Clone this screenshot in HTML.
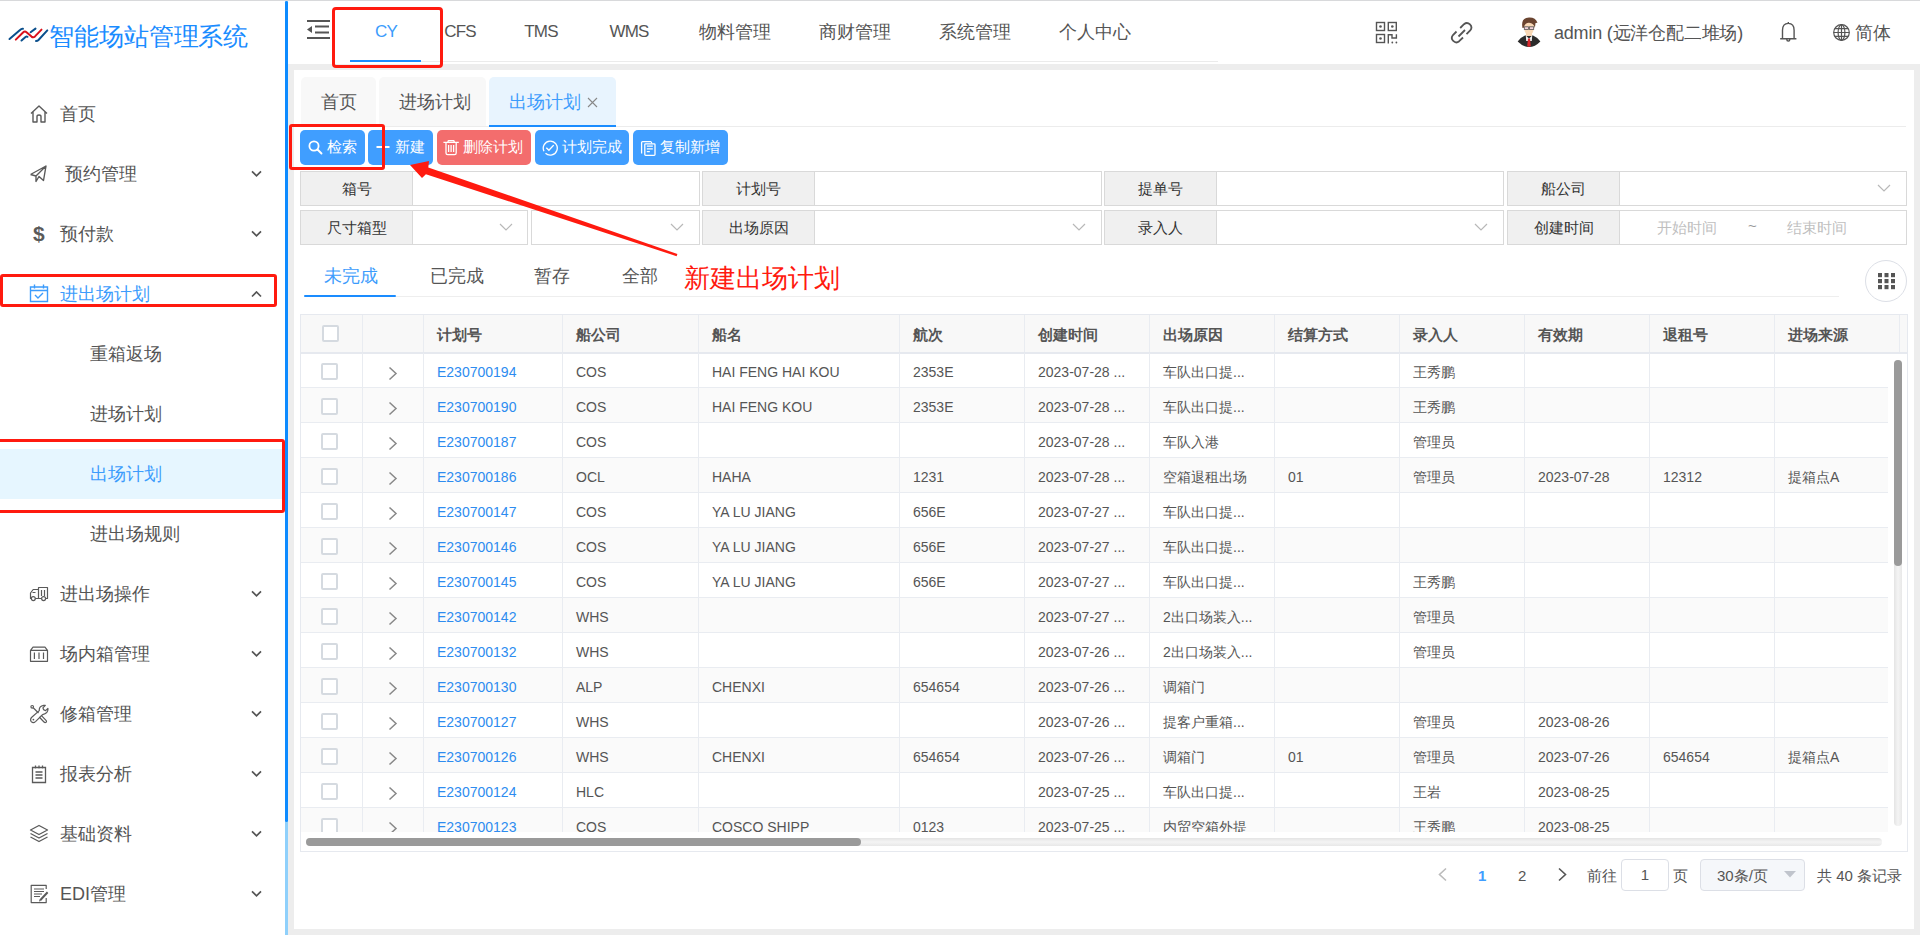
<!DOCTYPE html><html><head><meta charset="utf-8"><title>出场计划</title><style>
*{box-sizing:border-box;margin:0;padding:0}
html,body{width:1920px;height:935px;overflow:hidden}
body{position:relative;font-family:"Liberation Sans",sans-serif;background:#fff;color:#606266}
.a{position:absolute}
.nw{white-space:nowrap}
svg{display:block}
</style></head><body><div class="a" style="left:0;top:0;width:1920px;height:1px;background:#d8d9db"></div>
<div class="a" style="left:285px;top:1px;width:3px;height:934px;background:#8fd0fb"></div>
<div class="a" style="left:285px;top:1px;width:3px;height:821px;background:#0d8bff;border-radius:2px"></div>
<svg class="a" style="left:8px;top:26px" width="42" height="17" viewBox="8 26 42 17">
<g fill="none" stroke-linecap="round" stroke-width="2">
<path d="M9.5 39 L20 30 Q21.5 28.5 23 28.8" stroke="#0b4f8c"/>
<path d="M15.8 39.6 L23 32.5 Q24.8 30.8 26.5 32.2 L31.5 36.6 Q33.3 38 35 36.4 L41.5 29.6" stroke="#d9101b"/>
<path d="M21.5 40.5 L25.5 37 Q26.5 36.3 27.5 36.8" stroke="#0b4f8c"/>
<path d="M30.6 32.2 L35.5 28.6" stroke="#0b4f8c"/>
<path d="M36 41 Q37.5 41 38.5 40 L47.3 30.4" stroke="#0b4f8c"/>
</g></svg>
<div class="a nw" style="left:49px;top:19px;font-size:25px;line-height:34px;color:#1a8cff;letter-spacing:-0.1px">智能场站管理系统</div>
<div class="a" style="left:29px;top:104px"><svg width="20" height="20" viewBox="0 0 20 20"><path d="M2 9.5 L10 2 L18 9.5 M4 8 V18 H8 V12.5 Q8 11 10 11 Q12 11 12 12.5 V18 H16 V8" fill="none" stroke="#5a5a5a" stroke-width="1.4" stroke-linejoin="round"/></svg></div>
<div class="a nw" style="left:60px;top:102px;font-size:18px;line-height:24px;color:#555">首页</div>
<div class="a" style="left:29px;top:164px"><svg width="20" height="20" viewBox="0 0 20 20"><path d="M1.5 10.5 L17 2 L14.5 16.5 L10 12.5 L7 17.5 V12 L17 2 M1.5 10.5 L7 12" fill="none" stroke="#5a5a5a" stroke-width="1.4" stroke-linejoin="round"/></svg></div>
<div class="a nw" style="left:65px;top:162px;font-size:18px;line-height:24px;color:#555">预约管理</div>
<svg class="a" style="left:251px;top:170px" width="11" height="7" viewBox="0 0 11 7"><path d="M1 1.3 L5.5 5.8 L10 1.3" fill="none" stroke="#555" stroke-width="1.7"/></svg>
<div class="a nw" style="left:33px;top:220px;font-size:21px;line-height:28px;font-weight:bold;color:#5a5a5a">$</div>
<div class="a nw" style="left:60px;top:222px;font-size:18px;line-height:24px;color:#555">预付款</div>
<svg class="a" style="left:251px;top:230px" width="11" height="7" viewBox="0 0 11 7"><path d="M1 1.3 L5.5 5.8 L10 1.3" fill="none" stroke="#555" stroke-width="1.7"/></svg>
<div class="a" style="left:29px;top:584px"><svg width="20" height="20" viewBox="0 0 20 20"><path d="M9.5 3.5 H18.5 V14.5 H1.5 V9 L4.2 5.5 H9.5 Z M9.5 5.5 V14.5 M12.5 6 V12 M15.5 6 V12 M3.5 8.5 H6.5" fill="none" stroke="#5a5a5a" stroke-width="1.2" stroke-linejoin="round"/><circle cx="4.3" cy="14.6" r="2" fill="#fff" stroke="#5a5a5a" stroke-width="1.2"/><circle cx="14.6" cy="14.6" r="2" fill="#fff" stroke="#5a5a5a" stroke-width="1.2"/></svg></div>
<div class="a nw" style="left:60px;top:582px;font-size:18px;line-height:24px;color:#555">进出场操作</div>
<svg class="a" style="left:251px;top:590px" width="11" height="7" viewBox="0 0 11 7"><path d="M1 1.3 L5.5 5.8 L10 1.3" fill="none" stroke="#555" stroke-width="1.7"/></svg>
<div class="a" style="left:29px;top:644px"><svg width="20" height="20" viewBox="0 0 20 20"><path d="M1.5 6.3 L4 3.2 H16 L18.5 6.3 V17.3 H1.5 Z M1.5 6.3 H18.5 M5.4 8.5 V15 M10 8.5 V15 M14.5 8.5 V15" fill="none" stroke="#5a5a5a" stroke-width="1.2" stroke-linejoin="round"/></svg></div>
<div class="a nw" style="left:60px;top:642px;font-size:18px;line-height:24px;color:#555">场内箱管理</div>
<svg class="a" style="left:251px;top:650px" width="11" height="7" viewBox="0 0 11 7"><path d="M1 1.3 L5.5 5.8 L10 1.3" fill="none" stroke="#555" stroke-width="1.7"/></svg>
<div class="a" style="left:29px;top:704px"><svg width="20" height="20" viewBox="0 0 20 20"><g fill="none" stroke="#5a5a5a" stroke-width="1.2" stroke-linejoin="round"><circle cx="3.2" cy="2.8" r="1.3"/><path d="M4.2 3.8 L9.5 9"/><path d="M12 11.2 L17 16.3 Q18 17.5 17 18.3 Q16 19 15 18 L10.2 13"/><path d="M2.5 13.5 L10.3 6.6 Q9.8 2.2 14.6 1.3 L16.3 1.4 L13.9 3.8 Q14.2 6.4 16.6 6.6 L18.9 4.3 Q19.6 9.2 13.6 10.6 L6.5 17.6 Q4.2 19.6 2.3 17.6 Q0.8 15.6 2.5 13.5 Z"/></g><circle cx="4.4" cy="15.6" r="0.9" fill="#5a5a5a"/></svg></div>
<div class="a nw" style="left:60px;top:702px;font-size:18px;line-height:24px;color:#555">修箱管理</div>
<svg class="a" style="left:251px;top:710px" width="11" height="7" viewBox="0 0 11 7"><path d="M1 1.3 L5.5 5.8 L10 1.3" fill="none" stroke="#555" stroke-width="1.7"/></svg>
<div class="a" style="left:30px;top:764px"><svg width="18" height="20" viewBox="0 0 18 20"><path d="M2.5 3.5 H15.5 V18.5 H2.5 Z M5.5 1.5 V4.5 M9 1.5 V4.5 M12.5 1.5 V4.5 M5.5 8 H12.5 M5.5 11 H12.5 M5.5 14 H12.5" fill="none" stroke="#5a5a5a" stroke-width="1.3"/></svg></div>
<div class="a nw" style="left:60px;top:762px;font-size:18px;line-height:24px;color:#555">报表分析</div>
<svg class="a" style="left:251px;top:770px" width="11" height="7" viewBox="0 0 11 7"><path d="M1 1.3 L5.5 5.8 L10 1.3" fill="none" stroke="#555" stroke-width="1.7"/></svg>
<div class="a" style="left:29px;top:824px"><svg width="20" height="20" viewBox="0 0 20 20"><path d="M10 1.5 L18.5 6 L10 10.5 L1.5 6 Z M1.5 9.5 L10 14 L18.5 9.5 M1.5 13 L10 17.5 L18.5 13" fill="none" stroke="#5a5a5a" stroke-width="1.3" stroke-linejoin="round"/></svg></div>
<div class="a nw" style="left:60px;top:822px;font-size:18px;line-height:24px;color:#555">基础资料</div>
<svg class="a" style="left:251px;top:830px" width="11" height="7" viewBox="0 0 11 7"><path d="M1 1.3 L5.5 5.8 L10 1.3" fill="none" stroke="#555" stroke-width="1.7"/></svg>
<div class="a" style="left:29px;top:884px"><svg width="20" height="20" viewBox="0 0 20 20"><path d="M17.2 5 V1.3 H2.2 V18.6 H17.2 V14 M5 5 H15 M5 7.5 H15 M5 10 H13 M5 12.5 H11" fill="none" stroke="#5a5a5a" stroke-width="1.2" stroke-linejoin="round"/><path d="M18.6 8.3 L11.2 16.3" stroke="#5a5a5a" stroke-width="2"/><path d="M10.6 15.6 L10 17.5 L11.9 16.9 Z" fill="#5a5a5a"/></svg></div>
<div class="a nw" style="left:60px;top:882px;font-size:18px;line-height:24px;color:#555">EDI管理</div>
<svg class="a" style="left:251px;top:890px" width="11" height="7" viewBox="0 0 11 7"><path d="M1 1.3 L5.5 5.8 L10 1.3" fill="none" stroke="#555" stroke-width="1.7"/></svg>
<svg class="a" style="left:29px;top:284px" width="20" height="19" viewBox="0 0 20 19"><path d="M1.5 3 H18.5 V17.5 H1.5 Z M1.5 6.5 H18.5 M5.5 0.5 V4.5 M14.5 0.5 V4.5 M6 11 L9 14 L14 9" fill="none" stroke="#3c9cfc" stroke-width="1.4"/></svg>
<div class="a nw" style="left:60px;top:282px;font-size:18px;line-height:24px;color:#3c9cfc">进出场计划</div>
<svg class="a" style="left:251px;top:291px" width="11" height="7" viewBox="0 0 11 7"><path d="M1 5.5 L5.5 1 L10 5.5" fill="none" stroke="#555" stroke-width="1.7"/></svg>
<div class="a" style="left:0;top:449px;width:285px;height:50px;background:#e6f6ff"></div>
<div class="a nw" style="left:90px;top:342px;font-size:18px;line-height:24px;color:#555">重箱返场</div>
<div class="a nw" style="left:90px;top:402px;font-size:18px;line-height:24px;color:#555">进场计划</div>
<div class="a nw" style="left:90px;top:462px;font-size:18px;line-height:24px;color:#3c9cfc">出场计划</div>
<div class="a nw" style="left:90px;top:522px;font-size:18px;line-height:24px;color:#555">进出场规则</div>
<div class="a" style="left:350px;top:61px;width:868px;height:1px;background:#ebebeb"></div>
<div class="a" style="left:288px;top:64px;width:1632px;height:6px;background:#ededed"></div>
<div class="a" style="left:288px;top:64px;width:6px;height:871px;background:#ededed"></div>
<div class="a" style="left:1914px;top:64px;width:6px;height:871px;background:#ededed"></div>
<div class="a" style="left:288px;top:929px;width:1632px;height:6px;background:#ededed"></div>
<svg class="a" style="left:305px;top:18px" width="26" height="23" viewBox="305 18 26 23"><g fill="#555">
<rect x="307" y="20" width="23" height="2"/><rect x="315" y="25.5" width="14" height="2"/><rect x="315" y="31.5" width="14" height="2"/><rect x="307" y="37" width="23" height="2"/>
<path d="M307 29.5 L312 26 V33 Z"/></g></svg>
<div class="a nw" style="left:326px;width:120px;text-align:center;top:20px;line-height:24px;color:#3c9cfc;letter-spacing:-0.8px;font-size:17px;">CY</div>
<div class="a nw" style="left:400px;width:120px;text-align:center;top:20px;line-height:24px;color:#555;letter-spacing:-0.8px;font-size:17px;">CFS</div>
<div class="a nw" style="left:481px;width:120px;text-align:center;top:20px;line-height:24px;color:#555;letter-spacing:-0.8px;font-size:17px;">TMS</div>
<div class="a nw" style="left:569px;width:120px;text-align:center;top:20px;line-height:24px;color:#555;letter-spacing:-0.8px;font-size:17px;">WMS</div>
<div class="a nw" style="left:675px;width:120px;text-align:center;top:20px;line-height:24px;color:#555;font-size:18px;">物料管理</div>
<div class="a nw" style="left:795px;width:120px;text-align:center;top:20px;line-height:24px;color:#555;font-size:18px;">商财管理</div>
<div class="a nw" style="left:915px;width:120px;text-align:center;top:20px;line-height:24px;color:#555;font-size:18px;">系统管理</div>
<div class="a nw" style="left:1035px;width:120px;text-align:center;top:20px;line-height:24px;color:#555;font-size:18px;">个人中心</div>
<div class="a" style="left:350px;top:60px;width:71px;height:2px;background:#1a8cff"></div>
<svg class="a" style="left:1375px;top:21px" width="23" height="23" viewBox="0 0 23 23"><g fill="none" stroke="#555" stroke-width="1.4">
<rect x="1.5" y="1.5" width="8" height="8"/><rect x="13.3" y="1.5" width="8" height="8"/><rect x="1.5" y="13.5" width="8" height="8"/>
<path d="M13.3 22.5 V13.8 H17 V17 H21.4 V13.3"/></g>
<g fill="#555"><circle cx="5.5" cy="5.5" r="1.3"/><circle cx="17.3" cy="5.5" r="1.3"/><circle cx="5.5" cy="17.5" r="1.3"/><circle cx="17.3" cy="21.5" r="0.9"/><circle cx="21.4" cy="21.5" r="0.9"/></g></svg>
<svg class="a" style="left:1450px;top:20.5px" width="24" height="24" viewBox="0 0 24 24"><g fill="none" stroke="#555" stroke-width="1.8" stroke-linecap="butt">
<path d="M10.2 7 L14 3.2 A4.4 4.4 0 0 1 20.2 9.4 L16.5 13.2"/><path d="M6.5 10.5 L3 14 A4.4 4.4 0 0 0 9.2 20.2 L13 16.5"/><path d="M8.5 15.5 L15 9"/></g></svg>
<svg class="a" style="left:1515px;top:16px" width="28" height="33" viewBox="0 0 28 33">
<path d="M2.7 25.5 Q6 21 10 19.5 L18 19.5 Q22 21 25.4 25.5 Q20 31 14 31 Q8 31 2.7 25.5 Z" fill="#2b2b2b"/>
<path d="M11 17 H17 V20 H11 Z" fill="#f6d5b3"/>
<path d="M10.8 19.5 L14 22.5 L17.2 19.5 L16.8 25 L11.2 25 Z" fill="#eef0f0"/>
<path d="M13 22.5 H15 L15.8 30 L14 31 L12.2 30 Z" fill="#d8282c"/>
<path d="M8.5 6.5 Q8.5 18.5 14 19.3 Q19.5 18.5 19.5 6.5 Z" fill="#f8d8b6"/>
<path d="M7.5 12 Q5.5 1.8 14 1.5 Q20.5 1.2 22.5 6.8 L20.5 7 Q20.3 9.5 19.8 12 Q19 7.2 14 6.8 Q9.5 7 8.6 12 Z" fill="#6a4430"/>
<rect x="9.3" y="10.8" width="4.2" height="2.6" fill="#f0d0d8" stroke="#555" stroke-width="0.8"/><rect x="14.5" y="10.8" width="4.2" height="2.6" fill="#f0d0d8" stroke="#555" stroke-width="0.8"/>
</svg>
<div class="a nw" style="left:1554px;top:21px;font-size:18px;line-height:24px;color:#555;letter-spacing:-0.2px">admin (远洋仓配二堆场)</div>
<svg class="a" style="left:1779px;top:21px" width="18" height="22" viewBox="0 0 18 22"><path d="M3.5 17.8 V9.2 Q3.5 2.4 9.3 2.4 Q15.1 2.4 15.1 9.2 V17.8 M1.2 17.8 H17.4 M7.8 18.6 A1.5 1.5 0 0 0 10.8 18.6 M9.3 1 V2.4" fill="none" stroke="#555" stroke-width="1.4" stroke-linejoin="round"/></svg>
<svg class="a" style="left:1833px;top:24px" width="18" height="18" viewBox="0 0 18 18"><g fill="none" stroke="#555" stroke-width="1.2"><circle cx="8.5" cy="8.5" r="7.8"/><ellipse cx="8.5" cy="8.5" rx="3.4" ry="7.8"/><path d="M0.7 8.5 H16.3 M1.8 4.6 H15.2 M1.8 12.4 H15.2 M8.5 0.7 V16.3"/></g></svg>
<div class="a nw" style="left:1855px;top:21px;font-size:18px;line-height:24px;color:#555">简体</div>
<div class="a" style="left:294px;top:70px;width:1620px;height:859px;background:#fff"></div>
<div class="a" style="left:301px;top:126px;width:1605px;height:1px;background:#ececec"></div>
<div class="a" style="left:301px;top:77px;width:75px;height:49px;background:#f8f8f8;border-radius:5px 5px 0 0"></div>
<div class="a nw" style="left:321px;top:90px;font-size:18px;line-height:24px;color:#555">首页</div>
<div class="a" style="left:379px;top:77px;width:107px;height:49px;background:#f8f8f8;border-radius:5px 5px 0 0"></div>
<div class="a nw" style="left:399px;top:90px;font-size:18px;line-height:24px;color:#555">进场计划</div>
<div class="a" style="left:489px;top:77px;width:127px;height:49px;background:#e8f4fe;border-radius:5px 5px 0 0"></div>
<div class="a nw" style="left:509px;top:90px;font-size:18px;line-height:24px;color:#3c9cfc">出场计划</div>
<div class="a" style="left:489px;top:125px;width:127px;height:2px;background:#1a8cff"></div>
<svg class="a" style="left:587px;top:97px" width="11" height="11" viewBox="0 0 11 11"><path d="M1 1 L10 10 M10 1 L1 10" stroke="#888" stroke-width="1.1"/></svg>
<div class="a" style="left:300px;top:130px;width:65px;height:35px;background:#409eff;border-radius:5px"></div>
<div class="a" style="left:308px;top:140px"><svg width="15" height="15" viewBox="0 0 15 15"><circle cx="6" cy="6" r="4.6" fill="none" stroke="#fff" stroke-width="1.8"/><path d="M9.5 9.5 L13.5 13.5" stroke="#fff" stroke-width="1.9" stroke-linecap="round"/></svg></div>
<div class="a nw" style="left:327px;top:137px;font-size:15px;line-height:20px;color:#fff;font-weight:500">检索</div>
<div class="a" style="left:368px;top:130px;width:65px;height:35px;background:#409eff;border-radius:5px"></div>
<div class="a" style="left:376px;top:140px"><svg width="14" height="14" viewBox="0 0 14 14"><path d="M0.5 7 H13.5 M7 0.5 V13.5" stroke="#fff" stroke-width="1.9"/></svg></div>
<div class="a nw" style="left:395px;top:137px;font-size:15px;line-height:20px;color:#fff;font-weight:500">新建</div>
<div class="a" style="left:437px;top:130px;width:94px;height:35px;background:#f36d6d;border-radius:5px"></div>
<div class="a" style="left:443px;top:140px"><svg width="17" height="16" viewBox="0 0 17 16"><path d="M0.4 2.4 H15.8 M5 2.4 V1.6 Q5 0.6 6 0.6 H10.2 Q11.2 0.6 11.2 1.6 V2.4 M3 2.4 V12.9 Q3 14.6 4.7 14.6 H11.5 Q13.2 14.6 13.2 12.9 V2.4 M5.6 5 V12 M8.1 5 V12 M10.6 5 V12" fill="none" stroke="#fff" stroke-width="1.3" stroke-linejoin="round"/></svg></div>
<div class="a nw" style="left:463px;top:137px;font-size:15px;line-height:20px;color:#fff;font-weight:500">删除计划</div>
<div class="a" style="left:535px;top:130px;width:94px;height:35px;background:#409eff;border-radius:5px"></div>
<div class="a" style="left:542px;top:140px"><svg width="16" height="16" viewBox="0 0 16 16"><path d="M3.5 13.2 A7 7 0 1 0 2 11.2" fill="none" stroke="#fff" stroke-width="1.3"/><path d="M4.3 7.8 L6.9 10.3 L11.7 5.1" fill="none" stroke="#fff" stroke-width="1.4"/></svg></div>
<div class="a nw" style="left:562px;top:137px;font-size:15px;line-height:20px;color:#fff;font-weight:500">计划完成</div>
<div class="a" style="left:633px;top:130px;width:95px;height:35px;background:#409eff;border-radius:5px"></div>
<div class="a" style="left:640px;top:140px"><svg width="16" height="17" viewBox="0 0 16 17"><path d="M1.6 13.6 V2.6 Q1.6 1.6 2.6 1.6 H10.6 Q11.6 1.6 11.8 3.6" fill="none" stroke="#fff" stroke-width="1.3"/><rect x="4.8" y="3.8" width="10.2" height="11.6" rx="0.8" fill="#409eff" stroke="#fff" stroke-width="1.3"/><path d="M6.8 6.1 H12.8 M6.8 8.9 H12.8 M6.8 11.6 H9.8" fill="none" stroke="#fff" stroke-width="1.3"/></svg></div>
<div class="a nw" style="left:660px;top:137px;font-size:15px;line-height:20px;color:#fff;font-weight:500">复制新增</div>
<div class="a nw" style="left:300px;top:171px;width:113px;height:35px;background:#f0f0f0;border:1px solid #d9d9d9;text-align:center;font-size:15px;line-height:33px;color:#333">箱号</div>
<div class="a" style="left:412px;top:171px;width:288px;height:35px;background:#fff;border:1px solid #d9d9d9"></div>
<div class="a nw" style="left:702px;top:171px;width:113px;height:35px;background:#f0f0f0;border:1px solid #d9d9d9;text-align:center;font-size:15px;line-height:33px;color:#333">计划号</div>
<div class="a" style="left:814px;top:171px;width:288px;height:35px;background:#fff;border:1px solid #d9d9d9"></div>
<div class="a nw" style="left:1104px;top:171px;width:113px;height:35px;background:#f0f0f0;border:1px solid #d9d9d9;text-align:center;font-size:15px;line-height:33px;color:#333">提单号</div>
<div class="a" style="left:1216px;top:171px;width:288px;height:35px;background:#fff;border:1px solid #d9d9d9"></div>
<div class="a nw" style="left:1507px;top:171px;width:113px;height:35px;background:#f0f0f0;border:1px solid #d9d9d9;text-align:center;font-size:15px;line-height:33px;color:#333">船公司</div>
<div class="a" style="left:1619px;top:171px;width:288px;height:35px;background:#fff;border:1px solid #d9d9d9"></div>
<svg class="a" style="left:1877px;top:184px" width="14" height="8" viewBox="0 0 14 8"><path d="M1 1 L7 7 L13 1" fill="none" stroke="#b8b8b8" stroke-width="1.2"/></svg>
<div class="a nw" style="left:300px;top:210px;width:113px;height:35px;background:#f0f0f0;border:1px solid #d9d9d9;text-align:center;font-size:15px;line-height:33px;color:#333">尺寸箱型</div>
<div class="a" style="left:412px;top:210px;width:116px;height:35px;background:#fff;border:1px solid #d9d9d9"></div>
<svg class="a" style="left:499px;top:223px" width="14" height="8" viewBox="0 0 14 8"><path d="M1 1 L7 7 L13 1" fill="none" stroke="#b8b8b8" stroke-width="1.2"/></svg>
<div class="a" style="left:531px;top:210px;width:169px;height:35px;background:#fff;border:1px solid #d9d9d9"></div>
<svg class="a" style="left:670px;top:223px" width="14" height="8" viewBox="0 0 14 8"><path d="M1 1 L7 7 L13 1" fill="none" stroke="#b8b8b8" stroke-width="1.2"/></svg>
<div class="a nw" style="left:702px;top:210px;width:113px;height:35px;background:#f0f0f0;border:1px solid #d9d9d9;text-align:center;font-size:15px;line-height:33px;color:#333">出场原因</div>
<div class="a" style="left:814px;top:210px;width:288px;height:35px;background:#fff;border:1px solid #d9d9d9"></div>
<svg class="a" style="left:1072px;top:223px" width="14" height="8" viewBox="0 0 14 8"><path d="M1 1 L7 7 L13 1" fill="none" stroke="#b8b8b8" stroke-width="1.2"/></svg>
<div class="a nw" style="left:1104px;top:210px;width:113px;height:35px;background:#f0f0f0;border:1px solid #d9d9d9;text-align:center;font-size:15px;line-height:33px;color:#333">录入人</div>
<div class="a" style="left:1216px;top:210px;width:288px;height:35px;background:#fff;border:1px solid #d9d9d9"></div>
<svg class="a" style="left:1474px;top:223px" width="14" height="8" viewBox="0 0 14 8"><path d="M1 1 L7 7 L13 1" fill="none" stroke="#b8b8b8" stroke-width="1.2"/></svg>
<div class="a nw" style="left:1507px;top:210px;width:113px;height:35px;background:#f0f0f0;border:1px solid #d9d9d9;text-align:center;font-size:15px;line-height:33px;color:#333">创建时间</div>
<div class="a" style="left:1619px;top:210px;width:288px;height:35px;background:#fff;border:1px solid #d9d9d9"></div>
<div class="a nw" style="left:1657px;top:218px;font-size:15px;line-height:20px;color:#bfbfbf">开始时间</div>
<div class="a nw" style="left:1748px;top:216px;font-size:15px;line-height:20px;color:#999">~</div>
<div class="a nw" style="left:1787px;top:218px;font-size:15px;line-height:20px;color:#bfbfbf">结束时间</div>
<div class="a" style="left:304px;top:296px;width:1535px;height:1px;background:#eeeeee"></div>
<div class="a nw" style="left:324px;top:264px;font-size:18px;line-height:24px;color:#3c9cfc">未完成</div>
<div class="a nw" style="left:430px;top:264px;font-size:18px;line-height:24px;color:#555">已完成</div>
<div class="a nw" style="left:534px;top:264px;font-size:18px;line-height:24px;color:#555">暂存</div>
<div class="a nw" style="left:622px;top:264px;font-size:18px;line-height:24px;color:#555">全部</div>
<div class="a" style="left:304px;top:295px;width:92px;height:2px;border-radius:1px;background:#1a8cff"></div>
<div class="a" style="left:1865px;top:260px;width:42px;height:42px;border:1px solid #dcdfe6;border-radius:50%;background:#fff"></div>
<svg class="a" style="left:1877.5px;top:272.5px" width="17.5" height="17" viewBox="0 0 17.5 17"><g fill="#555"><rect x="0.0" y="0" width="4" height="4.2"/><rect x="6.5" y="0" width="4" height="4.2"/><rect x="13.0" y="0" width="4" height="4.2"/><rect x="0.0" y="6" width="4" height="4.2"/><rect x="6.5" y="6" width="4" height="4.2"/><rect x="13.0" y="6" width="4" height="4.2"/><rect x="0.0" y="12" width="4" height="4.2"/><rect x="6.5" y="12" width="4" height="4.2"/><rect x="13.0" y="12" width="4" height="4.2"/></g></svg>
<div class="a" style="left:300px;top:314px;width:1608px;height:538px;border:1px solid #e6e9ef;background:#fff"></div>
<div class="a" style="left:301px;top:315px;width:1606px;height:37px;background:#f8f8f8"></div>
<div class="a" style="left:301px;top:352px;width:1606px;height:2px;background:#e6e9ef"></div>
<div class="a" style="left:362px;top:315px;width:1px;height:37px;background:#e9ecf1"></div>
<div class="a" style="left:423px;top:315px;width:1px;height:37px;background:#e9ecf1"></div>
<div class="a" style="left:562px;top:315px;width:1px;height:37px;background:#e9ecf1"></div>
<div class="a" style="left:698px;top:315px;width:1px;height:37px;background:#e9ecf1"></div>
<div class="a" style="left:899px;top:315px;width:1px;height:37px;background:#e9ecf1"></div>
<div class="a" style="left:1024px;top:315px;width:1px;height:37px;background:#e9ecf1"></div>
<div class="a" style="left:1149px;top:315px;width:1px;height:37px;background:#e9ecf1"></div>
<div class="a" style="left:1274px;top:315px;width:1px;height:37px;background:#e9ecf1"></div>
<div class="a" style="left:1399px;top:315px;width:1px;height:37px;background:#e9ecf1"></div>
<div class="a" style="left:1524px;top:315px;width:1px;height:37px;background:#e9ecf1"></div>
<div class="a" style="left:1649px;top:315px;width:1px;height:37px;background:#e9ecf1"></div>
<div class="a" style="left:1774px;top:315px;width:1px;height:37px;background:#e9ecf1"></div>
<div class="a" style="left:1899px;top:315px;width:1px;height:37px;background:#e9ecf1"></div>
<div class="a nw" style="left:437px;top:325px;font-size:15px;line-height:20px;color:#555;font-weight:bold">计划号</div>
<div class="a nw" style="left:576px;top:325px;font-size:15px;line-height:20px;color:#555;font-weight:bold">船公司</div>
<div class="a nw" style="left:712px;top:325px;font-size:15px;line-height:20px;color:#555;font-weight:bold">船名</div>
<div class="a nw" style="left:913px;top:325px;font-size:15px;line-height:20px;color:#555;font-weight:bold">航次</div>
<div class="a nw" style="left:1038px;top:325px;font-size:15px;line-height:20px;color:#555;font-weight:bold">创建时间</div>
<div class="a nw" style="left:1163px;top:325px;font-size:15px;line-height:20px;color:#555;font-weight:bold">出场原因</div>
<div class="a nw" style="left:1288px;top:325px;font-size:15px;line-height:20px;color:#555;font-weight:bold">结算方式</div>
<div class="a nw" style="left:1413px;top:325px;font-size:15px;line-height:20px;color:#555;font-weight:bold">录入人</div>
<div class="a nw" style="left:1538px;top:325px;font-size:15px;line-height:20px;color:#555;font-weight:bold">有效期</div>
<div class="a nw" style="left:1663px;top:325px;font-size:15px;line-height:20px;color:#555;font-weight:bold">退租号</div>
<div class="a nw" style="left:1788px;top:325px;font-size:15px;line-height:20px;color:#555;font-weight:bold">进场来源</div>
<div class="a" style="left:322px;top:325px;width:17px;height:17px;border:2px solid #d5dae0;border-radius:2px;background:#fff"></div>
<div class="a" style="left:300px;top:353px;width:1607px;height:479px;overflow:hidden"><div class="a" style="left:1px;top:34px;width:1587px;height:1px;background:#e9ecf1"></div><div class="a" style="left:21px;top:10px;width:17px;height:17px;border:2px solid #d5dae0;border-radius:2px;background:#fff"></div><svg class="a" style="left:88px;top:13px" width="10" height="15" viewBox="0 0 10 15"><path d="M1.5 1.5 L8 7.5 L1.5 13.5" fill="none" stroke="#888" stroke-width="1.5"/></svg><div class="a nw" style="left:137px;top:9px;font-size:14px;line-height:20px;color:#2d8cf0">E230700194</div><div class="a nw" style="left:276px;top:9px;font-size:14px;line-height:20px;color:#555">COS</div><div class="a nw" style="left:412px;top:9px;font-size:14px;line-height:20px;color:#555">HAI FENG HAI KOU</div><div class="a nw" style="left:613px;top:9px;font-size:14px;line-height:20px;color:#555">2353E</div><div class="a nw" style="left:738px;top:9px;font-size:14px;line-height:20px;color:#555">2023-07-28 ...</div><div class="a nw" style="left:863px;top:9px;font-size:14px;line-height:20px;color:#555">车队出口提...</div><div class="a nw" style="left:1113px;top:9px;font-size:14px;line-height:20px;color:#555">王秀鹏</div><div class="a" style="left:1px;top:35px;width:1587px;height:35px;background:#fafafa"></div><div class="a" style="left:1px;top:69px;width:1587px;height:1px;background:#e9ecf1"></div><div class="a" style="left:21px;top:45px;width:17px;height:17px;border:2px solid #d5dae0;border-radius:2px;background:#fff"></div><svg class="a" style="left:88px;top:48px" width="10" height="15" viewBox="0 0 10 15"><path d="M1.5 1.5 L8 7.5 L1.5 13.5" fill="none" stroke="#888" stroke-width="1.5"/></svg><div class="a nw" style="left:137px;top:44px;font-size:14px;line-height:20px;color:#2d8cf0">E230700190</div><div class="a nw" style="left:276px;top:44px;font-size:14px;line-height:20px;color:#555">COS</div><div class="a nw" style="left:412px;top:44px;font-size:14px;line-height:20px;color:#555">HAI FENG KOU</div><div class="a nw" style="left:613px;top:44px;font-size:14px;line-height:20px;color:#555">2353E</div><div class="a nw" style="left:738px;top:44px;font-size:14px;line-height:20px;color:#555">2023-07-28 ...</div><div class="a nw" style="left:863px;top:44px;font-size:14px;line-height:20px;color:#555">车队出口提...</div><div class="a nw" style="left:1113px;top:44px;font-size:14px;line-height:20px;color:#555">王秀鹏</div><div class="a" style="left:1px;top:104px;width:1587px;height:1px;background:#e9ecf1"></div><div class="a" style="left:21px;top:80px;width:17px;height:17px;border:2px solid #d5dae0;border-radius:2px;background:#fff"></div><svg class="a" style="left:88px;top:83px" width="10" height="15" viewBox="0 0 10 15"><path d="M1.5 1.5 L8 7.5 L1.5 13.5" fill="none" stroke="#888" stroke-width="1.5"/></svg><div class="a nw" style="left:137px;top:79px;font-size:14px;line-height:20px;color:#2d8cf0">E230700187</div><div class="a nw" style="left:276px;top:79px;font-size:14px;line-height:20px;color:#555">COS</div><div class="a nw" style="left:738px;top:79px;font-size:14px;line-height:20px;color:#555">2023-07-28 ...</div><div class="a nw" style="left:863px;top:79px;font-size:14px;line-height:20px;color:#555">车队入港</div><div class="a nw" style="left:1113px;top:79px;font-size:14px;line-height:20px;color:#555">管理员</div><div class="a" style="left:1px;top:105px;width:1587px;height:35px;background:#fafafa"></div><div class="a" style="left:1px;top:139px;width:1587px;height:1px;background:#e9ecf1"></div><div class="a" style="left:21px;top:115px;width:17px;height:17px;border:2px solid #d5dae0;border-radius:2px;background:#fff"></div><svg class="a" style="left:88px;top:118px" width="10" height="15" viewBox="0 0 10 15"><path d="M1.5 1.5 L8 7.5 L1.5 13.5" fill="none" stroke="#888" stroke-width="1.5"/></svg><div class="a nw" style="left:137px;top:114px;font-size:14px;line-height:20px;color:#2d8cf0">E230700186</div><div class="a nw" style="left:276px;top:114px;font-size:14px;line-height:20px;color:#555">OCL</div><div class="a nw" style="left:412px;top:114px;font-size:14px;line-height:20px;color:#555">HAHA</div><div class="a nw" style="left:613px;top:114px;font-size:14px;line-height:20px;color:#555">1231</div><div class="a nw" style="left:738px;top:114px;font-size:14px;line-height:20px;color:#555">2023-07-28 ...</div><div class="a nw" style="left:863px;top:114px;font-size:14px;line-height:20px;color:#555">空箱退租出场</div><div class="a nw" style="left:988px;top:114px;font-size:14px;line-height:20px;color:#555">01</div><div class="a nw" style="left:1113px;top:114px;font-size:14px;line-height:20px;color:#555">管理员</div><div class="a nw" style="left:1238px;top:114px;font-size:14px;line-height:20px;color:#555">2023-07-28</div><div class="a nw" style="left:1363px;top:114px;font-size:14px;line-height:20px;color:#555">12312</div><div class="a nw" style="left:1488px;top:114px;font-size:14px;line-height:20px;color:#555">提箱点A</div><div class="a" style="left:1px;top:174px;width:1587px;height:1px;background:#e9ecf1"></div><div class="a" style="left:21px;top:150px;width:17px;height:17px;border:2px solid #d5dae0;border-radius:2px;background:#fff"></div><svg class="a" style="left:88px;top:153px" width="10" height="15" viewBox="0 0 10 15"><path d="M1.5 1.5 L8 7.5 L1.5 13.5" fill="none" stroke="#888" stroke-width="1.5"/></svg><div class="a nw" style="left:137px;top:149px;font-size:14px;line-height:20px;color:#2d8cf0">E230700147</div><div class="a nw" style="left:276px;top:149px;font-size:14px;line-height:20px;color:#555">COS</div><div class="a nw" style="left:412px;top:149px;font-size:14px;line-height:20px;color:#555">YA LU JIANG</div><div class="a nw" style="left:613px;top:149px;font-size:14px;line-height:20px;color:#555">656E</div><div class="a nw" style="left:738px;top:149px;font-size:14px;line-height:20px;color:#555">2023-07-27 ...</div><div class="a nw" style="left:863px;top:149px;font-size:14px;line-height:20px;color:#555">车队出口提...</div><div class="a" style="left:1px;top:175px;width:1587px;height:35px;background:#fafafa"></div><div class="a" style="left:1px;top:209px;width:1587px;height:1px;background:#e9ecf1"></div><div class="a" style="left:21px;top:185px;width:17px;height:17px;border:2px solid #d5dae0;border-radius:2px;background:#fff"></div><svg class="a" style="left:88px;top:188px" width="10" height="15" viewBox="0 0 10 15"><path d="M1.5 1.5 L8 7.5 L1.5 13.5" fill="none" stroke="#888" stroke-width="1.5"/></svg><div class="a nw" style="left:137px;top:184px;font-size:14px;line-height:20px;color:#2d8cf0">E230700146</div><div class="a nw" style="left:276px;top:184px;font-size:14px;line-height:20px;color:#555">COS</div><div class="a nw" style="left:412px;top:184px;font-size:14px;line-height:20px;color:#555">YA LU JIANG</div><div class="a nw" style="left:613px;top:184px;font-size:14px;line-height:20px;color:#555">656E</div><div class="a nw" style="left:738px;top:184px;font-size:14px;line-height:20px;color:#555">2023-07-27 ...</div><div class="a nw" style="left:863px;top:184px;font-size:14px;line-height:20px;color:#555">车队出口提...</div><div class="a" style="left:1px;top:244px;width:1587px;height:1px;background:#e9ecf1"></div><div class="a" style="left:21px;top:220px;width:17px;height:17px;border:2px solid #d5dae0;border-radius:2px;background:#fff"></div><svg class="a" style="left:88px;top:223px" width="10" height="15" viewBox="0 0 10 15"><path d="M1.5 1.5 L8 7.5 L1.5 13.5" fill="none" stroke="#888" stroke-width="1.5"/></svg><div class="a nw" style="left:137px;top:219px;font-size:14px;line-height:20px;color:#2d8cf0">E230700145</div><div class="a nw" style="left:276px;top:219px;font-size:14px;line-height:20px;color:#555">COS</div><div class="a nw" style="left:412px;top:219px;font-size:14px;line-height:20px;color:#555">YA LU JIANG</div><div class="a nw" style="left:613px;top:219px;font-size:14px;line-height:20px;color:#555">656E</div><div class="a nw" style="left:738px;top:219px;font-size:14px;line-height:20px;color:#555">2023-07-27 ...</div><div class="a nw" style="left:863px;top:219px;font-size:14px;line-height:20px;color:#555">车队出口提...</div><div class="a nw" style="left:1113px;top:219px;font-size:14px;line-height:20px;color:#555">王秀鹏</div><div class="a" style="left:1px;top:245px;width:1587px;height:35px;background:#fafafa"></div><div class="a" style="left:1px;top:279px;width:1587px;height:1px;background:#e9ecf1"></div><div class="a" style="left:21px;top:255px;width:17px;height:17px;border:2px solid #d5dae0;border-radius:2px;background:#fff"></div><svg class="a" style="left:88px;top:258px" width="10" height="15" viewBox="0 0 10 15"><path d="M1.5 1.5 L8 7.5 L1.5 13.5" fill="none" stroke="#888" stroke-width="1.5"/></svg><div class="a nw" style="left:137px;top:254px;font-size:14px;line-height:20px;color:#2d8cf0">E230700142</div><div class="a nw" style="left:276px;top:254px;font-size:14px;line-height:20px;color:#555">WHS</div><div class="a nw" style="left:738px;top:254px;font-size:14px;line-height:20px;color:#555">2023-07-27 ...</div><div class="a nw" style="left:863px;top:254px;font-size:14px;line-height:20px;color:#555">2出口场装入...</div><div class="a nw" style="left:1113px;top:254px;font-size:14px;line-height:20px;color:#555">管理员</div><div class="a" style="left:1px;top:314px;width:1587px;height:1px;background:#e9ecf1"></div><div class="a" style="left:21px;top:290px;width:17px;height:17px;border:2px solid #d5dae0;border-radius:2px;background:#fff"></div><svg class="a" style="left:88px;top:293px" width="10" height="15" viewBox="0 0 10 15"><path d="M1.5 1.5 L8 7.5 L1.5 13.5" fill="none" stroke="#888" stroke-width="1.5"/></svg><div class="a nw" style="left:137px;top:289px;font-size:14px;line-height:20px;color:#2d8cf0">E230700132</div><div class="a nw" style="left:276px;top:289px;font-size:14px;line-height:20px;color:#555">WHS</div><div class="a nw" style="left:738px;top:289px;font-size:14px;line-height:20px;color:#555">2023-07-26 ...</div><div class="a nw" style="left:863px;top:289px;font-size:14px;line-height:20px;color:#555">2出口场装入...</div><div class="a nw" style="left:1113px;top:289px;font-size:14px;line-height:20px;color:#555">管理员</div><div class="a" style="left:1px;top:315px;width:1587px;height:35px;background:#fafafa"></div><div class="a" style="left:1px;top:349px;width:1587px;height:1px;background:#e9ecf1"></div><div class="a" style="left:21px;top:325px;width:17px;height:17px;border:2px solid #d5dae0;border-radius:2px;background:#fff"></div><svg class="a" style="left:88px;top:328px" width="10" height="15" viewBox="0 0 10 15"><path d="M1.5 1.5 L8 7.5 L1.5 13.5" fill="none" stroke="#888" stroke-width="1.5"/></svg><div class="a nw" style="left:137px;top:324px;font-size:14px;line-height:20px;color:#2d8cf0">E230700130</div><div class="a nw" style="left:276px;top:324px;font-size:14px;line-height:20px;color:#555">ALP</div><div class="a nw" style="left:412px;top:324px;font-size:14px;line-height:20px;color:#555">CHENXI</div><div class="a nw" style="left:613px;top:324px;font-size:14px;line-height:20px;color:#555">654654</div><div class="a nw" style="left:738px;top:324px;font-size:14px;line-height:20px;color:#555">2023-07-26 ...</div><div class="a nw" style="left:863px;top:324px;font-size:14px;line-height:20px;color:#555">调箱门</div><div class="a" style="left:1px;top:384px;width:1587px;height:1px;background:#e9ecf1"></div><div class="a" style="left:21px;top:360px;width:17px;height:17px;border:2px solid #d5dae0;border-radius:2px;background:#fff"></div><svg class="a" style="left:88px;top:363px" width="10" height="15" viewBox="0 0 10 15"><path d="M1.5 1.5 L8 7.5 L1.5 13.5" fill="none" stroke="#888" stroke-width="1.5"/></svg><div class="a nw" style="left:137px;top:359px;font-size:14px;line-height:20px;color:#2d8cf0">E230700127</div><div class="a nw" style="left:276px;top:359px;font-size:14px;line-height:20px;color:#555">WHS</div><div class="a nw" style="left:738px;top:359px;font-size:14px;line-height:20px;color:#555">2023-07-26 ...</div><div class="a nw" style="left:863px;top:359px;font-size:14px;line-height:20px;color:#555">提客户重箱...</div><div class="a nw" style="left:1113px;top:359px;font-size:14px;line-height:20px;color:#555">管理员</div><div class="a nw" style="left:1238px;top:359px;font-size:14px;line-height:20px;color:#555">2023-08-26</div><div class="a" style="left:1px;top:385px;width:1587px;height:35px;background:#fafafa"></div><div class="a" style="left:1px;top:419px;width:1587px;height:1px;background:#e9ecf1"></div><div class="a" style="left:21px;top:395px;width:17px;height:17px;border:2px solid #d5dae0;border-radius:2px;background:#fff"></div><svg class="a" style="left:88px;top:398px" width="10" height="15" viewBox="0 0 10 15"><path d="M1.5 1.5 L8 7.5 L1.5 13.5" fill="none" stroke="#888" stroke-width="1.5"/></svg><div class="a nw" style="left:137px;top:394px;font-size:14px;line-height:20px;color:#2d8cf0">E230700126</div><div class="a nw" style="left:276px;top:394px;font-size:14px;line-height:20px;color:#555">WHS</div><div class="a nw" style="left:412px;top:394px;font-size:14px;line-height:20px;color:#555">CHENXI</div><div class="a nw" style="left:613px;top:394px;font-size:14px;line-height:20px;color:#555">654654</div><div class="a nw" style="left:738px;top:394px;font-size:14px;line-height:20px;color:#555">2023-07-26 ...</div><div class="a nw" style="left:863px;top:394px;font-size:14px;line-height:20px;color:#555">调箱门</div><div class="a nw" style="left:988px;top:394px;font-size:14px;line-height:20px;color:#555">01</div><div class="a nw" style="left:1113px;top:394px;font-size:14px;line-height:20px;color:#555">管理员</div><div class="a nw" style="left:1238px;top:394px;font-size:14px;line-height:20px;color:#555">2023-07-26</div><div class="a nw" style="left:1363px;top:394px;font-size:14px;line-height:20px;color:#555">654654</div><div class="a nw" style="left:1488px;top:394px;font-size:14px;line-height:20px;color:#555">提箱点A</div><div class="a" style="left:1px;top:454px;width:1587px;height:1px;background:#e9ecf1"></div><div class="a" style="left:21px;top:430px;width:17px;height:17px;border:2px solid #d5dae0;border-radius:2px;background:#fff"></div><svg class="a" style="left:88px;top:433px" width="10" height="15" viewBox="0 0 10 15"><path d="M1.5 1.5 L8 7.5 L1.5 13.5" fill="none" stroke="#888" stroke-width="1.5"/></svg><div class="a nw" style="left:137px;top:429px;font-size:14px;line-height:20px;color:#2d8cf0">E230700124</div><div class="a nw" style="left:276px;top:429px;font-size:14px;line-height:20px;color:#555">HLC</div><div class="a nw" style="left:738px;top:429px;font-size:14px;line-height:20px;color:#555">2023-07-25 ...</div><div class="a nw" style="left:863px;top:429px;font-size:14px;line-height:20px;color:#555">车队出口提...</div><div class="a nw" style="left:1113px;top:429px;font-size:14px;line-height:20px;color:#555">王岩</div><div class="a nw" style="left:1238px;top:429px;font-size:14px;line-height:20px;color:#555">2023-08-25</div><div class="a" style="left:1px;top:455px;width:1587px;height:35px;background:#fafafa"></div><div class="a" style="left:1px;top:489px;width:1587px;height:1px;background:#e9ecf1"></div><div class="a" style="left:21px;top:465px;width:17px;height:17px;border:2px solid #d5dae0;border-radius:2px;background:#fff"></div><svg class="a" style="left:88px;top:468px" width="10" height="15" viewBox="0 0 10 15"><path d="M1.5 1.5 L8 7.5 L1.5 13.5" fill="none" stroke="#888" stroke-width="1.5"/></svg><div class="a nw" style="left:137px;top:464px;font-size:14px;line-height:20px;color:#2d8cf0">E230700123</div><div class="a nw" style="left:276px;top:464px;font-size:14px;line-height:20px;color:#555">COS</div><div class="a nw" style="left:412px;top:464px;font-size:14px;line-height:20px;color:#555">COSCO SHIPP</div><div class="a nw" style="left:613px;top:464px;font-size:14px;line-height:20px;color:#555">0123</div><div class="a nw" style="left:738px;top:464px;font-size:14px;line-height:20px;color:#555">2023-07-25 ...</div><div class="a nw" style="left:863px;top:464px;font-size:14px;line-height:20px;color:#555">内贸空箱外提</div><div class="a nw" style="left:1113px;top:464px;font-size:14px;line-height:20px;color:#555">王秀鹏</div><div class="a nw" style="left:1238px;top:464px;font-size:14px;line-height:20px;color:#555">2023-08-25</div><div class="a" style="left:62px;top:0;width:1px;height:480px;background:#e9ecf1"></div><div class="a" style="left:123px;top:0;width:1px;height:480px;background:#e9ecf1"></div><div class="a" style="left:262px;top:0;width:1px;height:480px;background:#e9ecf1"></div><div class="a" style="left:398px;top:0;width:1px;height:480px;background:#e9ecf1"></div><div class="a" style="left:599px;top:0;width:1px;height:480px;background:#e9ecf1"></div><div class="a" style="left:724px;top:0;width:1px;height:480px;background:#e9ecf1"></div><div class="a" style="left:849px;top:0;width:1px;height:480px;background:#e9ecf1"></div><div class="a" style="left:974px;top:0;width:1px;height:480px;background:#e9ecf1"></div><div class="a" style="left:1099px;top:0;width:1px;height:480px;background:#e9ecf1"></div><div class="a" style="left:1224px;top:0;width:1px;height:480px;background:#e9ecf1"></div><div class="a" style="left:1349px;top:0;width:1px;height:480px;background:#e9ecf1"></div><div class="a" style="left:1474px;top:0;width:1px;height:480px;background:#e9ecf1"></div></div>
<div class="a" style="left:1894px;top:360px;width:8px;height:466px;border-radius:4px;background:linear-gradient(90deg,#e4e4e4,#f4f4f4 50%,#e8e8e8)"></div>
<div class="a" style="left:1894px;top:360px;width:8px;height:206px;border-radius:4px;background:#9a9a9a"></div>
<div class="a" style="left:306px;top:838px;width:1576px;height:8px;border-radius:4px;background:linear-gradient(180deg,#e4e4e4,#f4f4f4 50%,#e8e8e8)"></div>
<div class="a" style="left:306px;top:838px;width:555px;height:8px;border-radius:4px;background:#9a9a9a"></div>
<svg class="a" style="left:1437px;top:867px" width="11" height="15" viewBox="0 0 11 15"><path d="M9 1.5 L2.5 7.5 L9 13.5" fill="none" stroke="#bbb" stroke-width="1.6"/></svg>
<div class="a nw" style="left:1478px;top:866px;font-size:15px;line-height:20px;color:#409eff;font-weight:bold">1</div>
<div class="a nw" style="left:1518px;top:866px;font-size:15px;line-height:20px;color:#555">2</div>
<svg class="a" style="left:1557px;top:867px" width="11" height="15" viewBox="0 0 11 15"><path d="M2 1.5 L8.5 7.5 L2 13.5" fill="none" stroke="#555" stroke-width="1.6"/></svg>
<div class="a nw" style="left:1587px;top:866px;font-size:15px;line-height:20px;color:#555">前往</div>
<div class="a" style="left:1621px;top:859px;width:48px;height:32px;border:1px solid #dcdfe6;border-radius:4px;text-align:center;font-size:15px;line-height:29px;color:#555">1</div>
<div class="a nw" style="left:1673px;top:866px;font-size:15px;line-height:20px;color:#555">页</div>
<div class="a" style="left:1700px;top:859px;width:105px;height:32px;border:1px solid #dcdfe6;border-radius:4px;background:#f5f7fa"></div>
<div class="a nw" style="left:1717px;top:866px;font-size:15px;line-height:20px;color:#555">30条/页</div>
<svg class="a" style="left:1784px;top:871px" width="12" height="7" viewBox="0 0 12 7"><path d="M0 0 H12 L6 6.5 Z" fill="#c0c4cc"/></svg>
<div class="a nw" style="left:1817px;top:866px;font-size:15px;line-height:20px;color:#555">共 40 条记录</div>
<div class="a" style="left:332px;top:7px;width:111px;height:61px;border:3px solid #ff1a0f;border-radius:4px"></div>
<div class="a" style="left:0px;top:274px;width:277px;height:33px;border:3px solid #ff1a0f;border-radius:3px"></div>
<div class="a" style="left:-3px;top:439px;width:288px;height:74px;border:3px solid #ff1a0f;border-radius:3px"></div>
<div class="a" style="left:289px;top:124px;width:96px;height:46px;border:3px solid #ff1a0f;border-radius:3px"></div>
<svg class="a" style="left:0;top:0" width="1920" height="935"><path d="M410 165 L429 161 L428.3 167.4 L677.4 254 L676.6 256.2 L425.9 174.2 L422 178 Z" fill="#ff1a0f"/></svg>
<div class="a nw" style="left:684px;top:262px;font-size:26px;line-height:32px;color:#ff1a0f">新建出场计划</div></body></html>
